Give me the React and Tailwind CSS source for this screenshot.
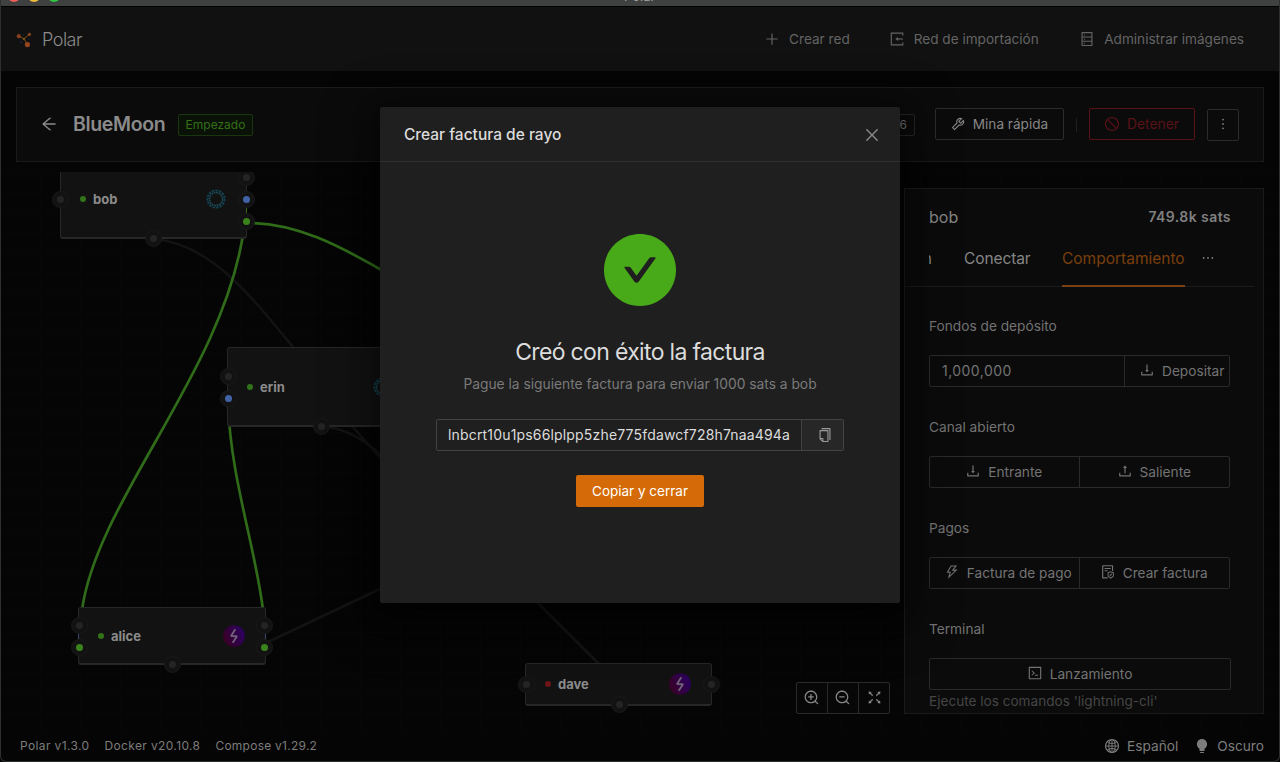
import {
  AiFillBulb,
  AiFillCheckCircle,
  AiOutlineArrowLeft,
  AiOutlineClose,
  AiOutlineCode,
  AiOutlineCopy,
  AiOutlineDatabase,
  AiOutlineDownload,
  AiOutlineEllipsis,
  AiOutlineFileProtect,
  AiOutlineFullscreen,
  AiOutlineGlobal,
  AiOutlineMore,
  AiOutlinePlus,
  AiOutlineStop,
  AiOutlineThunderbolt,
  AiOutlineTool,
  AiOutlineUpload,
  AiOutlineZoomIn,
  AiOutlineZoomOut,
} from 'react-icons/ai';

// Trims the built-in margin of the icon set so that glyphs fill their box.
function Glyph({ icon: Icon, size = 14, className = '' }) {
  return <Icon size={size} viewBox="64 64 896 896" className={`shrink-0 ${className}`} />;
}

function ImportGlyph() {
  return (
    <svg width="14" height="14" viewBox="0 0 14 14" fill="none" stroke="currentColor" strokeWidth="1.15">
      <path d="M12.8 3.4V1.1H1.3v11.8h11.5v-2.3" />
      <path d="M12.9 7H7" />
      <path d="M8.1 4.9v4.2L5.4 7z" fill="currentColor" stroke="none" />
    </svg>
  );
}

function TitleBar() {
  return (
    <div className="relative h-[7px] shrink-0 overflow-hidden border-b border-black bg-[#3f4141]">
      <div className="absolute -top-[10px] left-[8px] flex gap-2">
        <span className="size-3 rounded-full bg-[#ee5f57]" />
        <span className="size-3 rounded-full bg-[#f0bb3a]" />
        <span className="size-3 rounded-full bg-[#2bc840]" />
      </div>
      <span className="absolute -top-[14px] left-[624px] text-[13px] leading-5 text-[#a0a0a0]">Polar</span>
    </div>
  );
}

function PolarLogo() {
  return (
    <svg width="16" height="16" viewBox="0 0 16 16">
      <path d="M2.8 4.2 8 6.8 13.2 2.4M8 6.8l3 5" stroke="#7c4a17" strokeWidth="1" fill="none" />
      <circle cx="2.8" cy="4.2" r="2.1" fill="#863f20" />
      <circle cx="13.4" cy="2.4" r="1.7" fill="#863f20" />
      <circle cx="11.4" cy="12.6" r="2.6" fill="#934420" />
      <circle cx="8" cy="6.9" r="1.2" fill="#7d5a18" />
      <circle cx="5" cy="10.2" r="1" fill="#18284c" />
      <circle cx="7.6" cy="2.8" r="0.7" fill="#20252f" />
      <circle cx="13" cy="7" r="0.7" fill="#20252f" />
    </svg>
  );
}

function Header() {
  return (
    <header className="flex h-16 shrink-0 items-center bg-[#111111] pr-9 pl-4">
      <span className="mt-[2px]">
        <PolarLogo />
      </span>
      <span className="mt-[2px] ml-[10px] text-lg font-light tracking-[-0.5px] text-[#8b8b8b]">Polar</span>
      <nav className="ml-auto flex items-center gap-10 text-[13.6px] text-[#646464]">
        <span className="flex items-center gap-[10px]">
          <Glyph icon={AiOutlinePlus} />
          Crear red
        </span>
        <span className="flex items-center gap-[10px]">
          <ImportGlyph />
          <span className="w-[126.5px] whitespace-nowrap">Red de importación</span>
        </span>
        <span className="flex items-center gap-[10px]">
          <Glyph icon={AiOutlineDatabase} />
          Administrar imágenes
        </span>
      </nav>
    </header>
  );
}

function NetworkHeader() {
  return (
    <section className="mx-4 mt-4 flex h-[75px] shrink-0 items-center border border-[#1b1b1b] bg-[#0b0b0b] px-6">
      <Glyph icon={AiOutlineArrowLeft} size={16} className="mb-[2px] text-[#8b8b8b]" />
      <h1 className="ml-4 w-[93px] text-[19.5px] font-semibold tracking-[-0.35px] text-[#8b8b8b]">BlueMoon</h1>
      <span className="ml-3 flex h-[22px] w-[75px] items-center justify-center rounded-xs border border-[#1b3511] bg-[#0a1107] text-xs text-[#33701a]">
        Empezado
      </span>
      <span className="ml-auto flex h-[22px] items-center rounded-xs border border-[#262626] px-[7px] text-xs text-[#707070]">
        Altura: 106
      </span>
      <button className="mb-[2px] ml-5 flex h-8 w-[129px] items-center justify-center gap-2 rounded-xs border border-[#2c2c2c] text-[13.6px] text-[#868686]">
        <Glyph icon={AiOutlineTool} />
        <span className="mt-[2px]">Mina rápida</span>
      </button>
      <span className="mx-3 h-[14px] w-px bg-[#1f1f1f]" />
      <button className="mb-[2px] flex h-8 w-[106px] items-center justify-center gap-2 rounded-xs border border-[#5a1217] text-[13.8px] text-[#5a1217]">
        <Glyph icon={AiOutlineStop} />
        <span className="mt-[2px]">Detener</span>
      </button>
      <button className="ml-3 flex size-8 items-center justify-center rounded-xs border border-[#2c2c2c] text-[#868686]">
        <Glyph icon={AiOutlineMore} className="mb-[2px]" />
      </button>
    </section>
  );
}

const PORT_COLORS = {
  idle: 'bg-[#242424]',
  blue: 'bg-[#4262a6]',
  green: 'bg-[#3b841b]',
};

function Port({ x, y, kind = 'idle' }) {
  return (
    <span
      className="absolute flex size-[17px] items-center justify-center rounded-full border border-[#191919] bg-[#121212]"
      style={{ left: x - 8.5, top: y - 8.5 }}
    >
      <span className={`size-[7px] rounded-full ${PORT_COLORS[kind]}`} />
    </span>
  );
}

function CLightningIcon() {
  return (
    <svg width="20" height="20" viewBox="0 0 20 20" fill="none">
      <circle cx="10" cy="10" r="8.6" stroke="#143f4d" strokeWidth="2" strokeDasharray="2.6 1" />
      <circle cx="10" cy="10" r="6.5" stroke="#1b505c" strokeWidth="1.5" strokeDasharray="1.8 0.7" />
    </svg>
  );
}

function LndIcon({ id }) {
  return (
    <svg width="22" height="22" viewBox="0 0 22 22">
      <defs>
        <linearGradient id={id} x1="0" y1="0.75" x2="1" y2="0.3">
          <stop offset="0" stopColor="#3a0022" />
          <stop offset="1" stopColor="#2a0062" />
        </linearGradient>
      </defs>
      <circle cx="11" cy="11" r="10.8" fill={`url(#${id})`} />
      <path d="M12.3 4.2 8 11l6 .2-4.3 6.6" stroke="#70607a" strokeWidth="1.9" fill="none" strokeLinejoin="bevel" />
    </svg>
  );
}

function Node({ x, y, w, h, name, running, children }) {
  return (
    <div
      className="absolute flex items-center rounded-[3px] border border-b-2 border-[#272727] bg-[#121212] pr-[20px] pl-[19px]"
      style={{ left: x, top: y, width: w, height: h }}
    >
      <span className={`size-[6px] rounded-full ${running ? 'bg-[#32731a]' : 'bg-[#6d1519]'}`} />
      <span className="mt-[2px] ml-[7px] text-[13px] font-bold text-[#8b8b8b]">{name}</span>
      <span className="ml-auto">{children}</span>
    </div>
  );
}

function Links() {
  return (
    <svg className="absolute inset-0" width="1280" height="558" viewBox="0 172 1280 558" fill="none">
      <g stroke="#131313" strokeWidth="2.6">
        <path d="M153 239C210 243 250 295 293 347" />
        <path d="M321 427C345 427 365 440 382 456M353 427 384 462" />
        <path d="M268 642C300 627 350 603 382 588" />
        <path d="M537 602 600 665" />
      </g>
      <g stroke="#2f6b19" strokeWidth="2.7">
        <path d="M246 223C295 222 340 246 384 271.5" />
        <path d="M244 228C225 370 97 500 82 610" />
        <path d="M228 404C231 480 255 545 263 610" />
      </g>
    </svg>
  );
}

function Canvas() {
  return (
    <div className="absolute inset-0 overflow-hidden bg-[linear-gradient(to_right,#070707_1px,transparent_1px),linear-gradient(to_bottom,#070707_1px,transparent_1px)] bg-[size:40px_20px]">
      <Links />
      <Node x={60} y={-12} w={187} h={79} name="bob" running>
        <CLightningIcon />
      </Node>
      <span className="absolute top-[36px] left-[245.5px] h-[5px] w-px bg-[#2f6b19]" />
      <Port x={60} y={27} />
      <Port x={246} y={5} />
      <Port x={246} y={27} kind="blue" />
      <Port x={246} y={49} kind="green" />
      <Port x={153} y={66.5} />

      <Node x={227} y={175} w={187} h={80} name="erin" running>
        <CLightningIcon />
      </Node>
      <Port x={228.5} y={204} />
      <Port x={228.5} y={226} kind="blue" />
      <Port x={321} y={254} />

      <Node x={78} y={435} w={188} h={58} name="alice" running>
        <LndIcon id="lnd-alice" />
      </Node>
      <span className="absolute top-[462px] left-[78px] h-[5px] w-px bg-[#3a4a70]" />
      <span className="absolute top-[462px] left-[265px] h-[5px] w-px bg-[#3a4a70]" />
      <Port x={79.5} y={453.5} />
      <Port x={79.5} y={475.5} kind="green" />
      <Port x={264.5} y={453.5} />
      <Port x={264.5} y={475.5} kind="green" />
      <Port x={172} y={492.5} />

      <Node x={525} y={491} w={187} h={43} name="dave">
        <LndIcon id="lnd-dave" />
      </Node>
      <Port x={526} y={512.5} />
      <Port x={711.5} y={512.5} />
      <Port x={619} y={532.5} />
    </div>
  );
}

function ZoomControls() {
  return (
    <div className="mr-[14px] flex h-8 items-center divide-x divide-[#2a2a2a] rounded-xs border border-[#2a2a2a] bg-[#070707] text-[#868686]">
      <span className="flex h-full w-[31px] items-center justify-center pr-px pb-px"><Glyph icon={AiOutlineZoomIn} size={15} /></span>
      <span className="flex h-full w-[31px] items-center justify-center pr-px pb-px"><Glyph icon={AiOutlineZoomOut} size={15} /></span>
      <span className="flex h-full w-[30px] items-center justify-center pb-px"><Glyph icon={AiOutlineFullscreen} size={15} /></span>
    </div>
  );
}

function ActionPair({ children }) {
  return (
    <div className="mt-[19px] flex h-8 w-[301px] divide-x divide-[#2a2a2a] rounded-xs border border-[#2a2a2a]">
      {children}
    </div>
  );
}

function Action({ icon, className = '', children }) {
  return (
    <button className={`flex w-1/2 items-center justify-center gap-2 whitespace-nowrap ${className}`}>
      <Glyph icon={icon} className="mb-[2px]" />
      {children}
    </button>
  );
}

function Sidebar() {
  return (
    <aside className="relative mr-4 flex h-[526px] w-[360px] flex-col overflow-hidden border border-[#1b1b1b] bg-[#0b0b0b] text-[13.7px] text-[#737373]">
      <div className="mt-[16px] mr-8 ml-6 flex h-6 items-center justify-between">
        <span className="text-base text-[#868686]">bob</span>
        <span className="text-sm font-semibold tracking-[0.42px] text-[#808080]">749.8k sats</span>
      </div>
      <div className="mr-[9px] flex h-[58px] border-b border-[#1b1b1b] pl-6 text-[15.5px] text-[#868686]">
        <span className="flex h-[58px] w-[3px] shrink-0 items-center justify-end overflow-hidden pt-[2px]">n</span>
        <span className="ml-8 flex h-[58px] w-[66px] items-center pt-[2px] tracking-[-0.1px]">Conectar</span>
        <span className="ml-8 flex h-[58px] items-center border-b-2 border-[#7a4012] pt-1 text-[#7a3f0b]">Comportamiento</span>
        <Glyph icon={AiOutlineEllipsis} className="mt-[22px] ml-4" />
      </div>
      <div className="pl-6">
        <p className="mt-[29px] leading-5">Fondos de depósito</p>
        <div className="mt-[19px] flex h-8 w-[301px] items-center rounded-xs border border-[#2a2a2a]">
          <span className="w-[194px] pl-3 text-sm tracking-[0.45px]">1,000,000</span>
          <span className="flex h-full flex-1 items-center gap-2 border-l border-[#2a2a2a] pl-[15px]">
            <Glyph icon={AiOutlineDownload} className="mb-[2px]" />
            Depositar
          </span>
        </div>
        <p className="mt-[30px] leading-5">Canal abierto</p>
        <ActionPair>
          <Action icon={AiOutlineDownload}>Entrante</Action>
          <Action icon={AiOutlineUpload}>Saliente</Action>
        </ActionPair>
        <p className="mt-[30px] leading-5">Pagos</p>
        <ActionPair>
          <Action icon={AiOutlineThunderbolt} className="pl-[8px] text-[13.6px]">Factura de pago</Action>
          <Action icon={AiOutlineFileProtect} className="text-[13.6px]">Crear factura</Action>
        </ActionPair>
        <p className="mt-[30px] leading-5">Terminal</p>
        <button className="mt-[19px] flex h-8 w-[302px] items-center justify-center gap-2 rounded-xs border border-[#2a2a2a]">
          <Glyph icon={AiOutlineCode} className="mb-[2px]" />
          Lanzamiento
        </button>
        <p className="mt-px text-[13.6px] leading-5 text-[#464646]">Ejecute los comandos 'lightning-cli'</p>
      </div>
    </aside>
  );
}

function Footer() {
  return (
    <footer className="flex h-8 shrink-0 items-center pr-4 pl-5 text-xs tracking-[0.37px] text-[#7c7c7c]">
      <span>Polar v1.3.0</span>
      <span className="ml-[15px]">Docker v20.10.8</span>
      <span className="ml-[15px] tracking-[0.25px]">Compose v1.29.2</span>
      <span className="ml-auto flex items-center gap-2 text-[13.7px] tracking-normal"><Glyph icon={AiOutlineGlobal} />Español</span>
      <span className="ml-[17px] flex items-center gap-2 text-[13.7px] tracking-normal"><Glyph icon={AiFillBulb} />Oscuro</span>
    </footer>
  );
}

function InvoiceModal() {
  return (
    <div className="absolute top-[107px] left-[380px] flex h-[496px] w-[520px] flex-col rounded-xs bg-[#1f1f1f] shadow-[0_6px_16px_-8px_rgba(0,0,0,0.32),0_9px_28px_rgba(0,0,0,0.3),0_12px_48px_16px_rgba(0,0,0,0.25)]">
      <div className="flex h-[55px] items-center justify-between border-b border-[#303030] px-6 text-[#dcdcdc]">
        <h2 className="mt-[2px] text-[15.5px] font-medium">Crear factura de rayo</h2>
        <Glyph icon={AiOutlineClose} size={16} className="mt-[2px] mr-[-4px] text-[#868686]" />
      </div>
      <div className="flex flex-col items-center">
        <Glyph icon={AiFillCheckCircle} size={72} className="mt-[72px] text-[#49aa19]" />
        <h3 className="mt-[25px] text-[23px] leading-[43px] tracking-[-0.66px] text-[#dcdcdc]">Creó con éxito la factura</h3>
        <p className="-mt-px text-[13.8px] leading-[22px] text-[#7a7a7a]">Pague la siguiente factura para enviar 1000 sats a bob</p>
        <div className="mt-6 flex h-8 w-[408px] rounded-xs border border-[#434343]">
          <span className="w-[364px] overflow-hidden pl-[11px] text-sm leading-[30px] tracking-[0.17px] whitespace-nowrap text-[#dcdcdc]">
            lnbcrt10u1ps66lplpp5zhe775fdawcf728h7naa494a
          </span>
          <span className="flex flex-1 items-center justify-center border-l border-[#434343] bg-[#272727] pl-[5px] text-[#9a9a9a]">
            <Glyph icon={AiOutlineCopy} />
          </span>
        </div>
        <button className="mt-6 h-8 w-32 rounded-xs bg-[#d46b08] text-[13.5px] text-white">Copiar y cerrar</button>
      </div>
    </div>
  );
}

export default function App() {
  return (
    <div className="relative flex h-[762px] w-[1280px] flex-col overflow-hidden bg-[#050505] font-['Inter','Liberation_Sans',sans-serif]">
      <TitleBar />
      <Header />
      <NetworkHeader />
      <main className="relative mt-[10px] flex h-[558px] shrink-0 items-end justify-end pb-4">
        <Canvas />
        <div className="relative flex items-end">
          <ZoomControls />
          <Sidebar />
        </div>
      </main>
      <Footer />
      <div className="pointer-events-none absolute inset-0 rounded-b-md border-x border-b border-[#2e3030]" />
      <InvoiceModal />
    </div>
  );
}
